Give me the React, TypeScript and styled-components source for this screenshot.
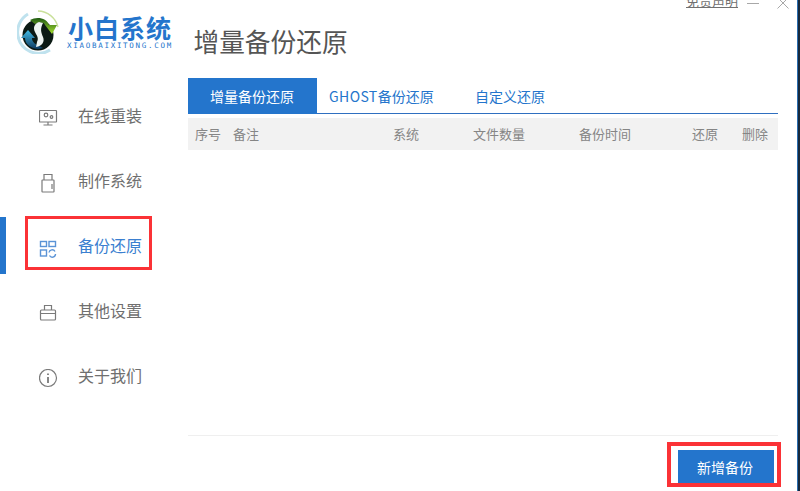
import React from 'react'
import styled, {createGlobalStyle} from 'styled-components'

const GlobalStyle = createGlobalStyle`
  html, body {
    margin: 0;
    padding: 0;
    background: #fff;
  }
  * {
    box-sizing: border-box;
  }
`

const font = `"Noto Sans CJK SC", "Noto Sans", sans-serif`
const blue = '#2475cc'

const Screen = styled.div`
  width: 800px;
  height: 491px;
  display: flex;
  overflow: hidden;
  background: #16293d;
  font-family: ${font};
`

const Window = styled.div`
  width: 798px;
  height: 491px;
  display: flex;
  background: #fff;
  border-right: 1px solid #2a6db0;
`

const Sidebar = styled.aside`
  width: 188px;
  flex-shrink: 0;
  display: flex;
  flex-direction: column;
`

const Logo = styled.div`
  height: 87px;
  padding: 10px 0 0 17px;
  display: flex;
  align-items: flex-start;
  gap: 9px;
`

const LogoText = styled.div`
  display: flex;
  flex-direction: column;
  padding-top: 3px;
`

const LogoTitle = styled.div`
  font-size: 25px;
  line-height: 28px;
  font-weight: 700;
  letter-spacing: 1px;
  color: ${blue};
  white-space: nowrap;
`

const LogoSub = styled.div`
  font-family: "DejaVu Sans Mono", monospace;
  font-size: 7.5px;
  line-height: 10px;
  letter-spacing: 1.72px;
  margin-left: -1px;
  color: ${blue};
  white-space: nowrap;
`

const Nav = styled.nav`
  display: flex;
  flex-direction: column;
  gap: 8px;
`

const NavItem = styled.div<{$active?: boolean}>`
  position: relative;
  height: 57px;
  display: flex;
  align-items: center;
  gap: 20px;
  padding-bottom: 2px;
  font-size: 16px;
  color: ${p => (p.$active ? '#3b7fd0' : '#6f6f6f')};
  border-left: ${p => (p.$active ? `6px solid ${blue}` : 'none')};
  padding-left: ${p => (p.$active ? '33px' : '39px')};
`

const NavIcon = styled.svg`
  width: 19px;
  height: 19px;
  margin-top: 8px;
  flex-shrink: 0;
  fill: none;
  stroke: #7a7a7a;
  stroke-width: 1.2;
`

const ActiveIcon = styled(NavIcon)`
  stroke: #5a93d6;
  stroke-width: 1.4;
`

const NavMark = styled.span`
  position: absolute;
  left: 19px;
  top: -1px;
  width: 127px;
  height: 54px;
  border: 3px solid #fb3236;
`

const Main = styled.main`
  flex: 1;
  width: 590px;
  display: flex;
  flex-direction: column;
  position: relative;
`

const TopLinks = styled.div`
  height: 20px;
  display: flex;
  align-items: flex-start;
`

const Disclaimer = styled.a`
  position: absolute;
  left: 498px;
  top: -9px;
  font-size: 13px;
  line-height: 19px;
  color: #707070;
  text-decoration: underline;
`

const WinIcon = styled.svg`
  position: absolute;
  top: 0;
  width: 14px;
  height: 10px;
  fill: none;
  stroke: #a8a8a8;
  stroke-width: 1;
`

const MinIcon = styled(WinIcon)`
  left: 558px;
`

const CloseIcon = styled(WinIcon)`
  left: 588px;
`

const Title = styled.h1`
  margin: 0;
  height: 58px;
  padding-left: 5.5px;
  font-size: 25.7px;
  line-height: 42px;
  font-weight: 400;
  color: #555;
`

const Tabs = styled.div`
  width: 590px;
  height: 36px;
  display: flex;
  border-bottom: 1px solid #2f6fc0;
`

const Tab = styled.div<{$active?: boolean; $width: number; $pad: number}>`
  width: ${p => p.$width}px;
  height: 36px;
  padding-left: ${p => p.$pad}px;
  font-size: 14px;
  line-height: 37px;
  white-space: nowrap;
  color: ${p => (p.$active ? '#fff' : blue)};
  background: ${p => (p.$active ? blue : 'transparent')};
`

const TabLatin = styled.span`
  letter-spacing: 0.4px;
`

const TableHead = styled.div`
  width: 590px;
  height: 32px;
  margin-top: 4px;
  padding: 0 0 2px 7px;
  display: grid;
  grid-template-columns: 38px 160px 80px 106px 113px 50px 36px;
  align-items: center;
  background: #f2f2f2;
  font-size: 13px;
  color: #858585;
`

const TableBody = styled.div`
  flex: 1;
  width: 590px;
  border-bottom: 1px solid #efefef;
`

const Footer = styled.div`
  width: 590px;
  height: 55px;
  padding: 14px 4px 0 0;
  display: flex;
  justify-content: flex-end;
  align-items: flex-start;
`

const AddButton = styled.div`
  position: relative;
  width: 96px;
  height: 33px;
  padding-right: 2px;
  background: ${blue};
  color: #fff;
  font-size: 14px;
  line-height: 34px;
  text-align: center;
`

const ButtonMark = styled.span`
  position: absolute;
  left: -11px;
  top: -8px;
  width: 114px;
  height: 45px;
  border: 4px solid #fb3236;
`

const LogoMark = () => (
  <svg width="42" height="44" viewBox="0 0 42 44">
    <defs>
      <linearGradient id="greenArrow" x1="0" y1="0" x2="0" y2="1">
        <stop offset="0" stopColor="#1f5a12" />
        <stop offset="1" stopColor="#a6e030" />
      </linearGradient>
      <linearGradient id="blueArrow" x1="0" y1="0" x2="0" y2="1">
        <stop offset="0" stopColor="#45bce6" />
        <stop offset="1" stopColor="#0c3a60" />
      </linearGradient>
    </defs>
    <path d="M21 1 A21 21 0 0 1 41 17" fill="none" stroke="#c9e09a" strokeWidth="1.4" />
    <path d="M33 40 A21 21 0 0 1 1 26 A21 21 0 0 1 11 4" fill="none" stroke="#bfe2ee" strokeWidth="3" />
    <circle cx="21" cy="25" r="15.5" fill="#0b1a14" />
    <path d="M13 10 C20 6 30 8 32 15 L40 15 L35 24 L28 15 C27 12 22 12 18 14 Z" fill="url(#greenArrow)" />
    <path d="M11 20 L18 28 L15 28 C15 32 18 34 22 36 L26 38 C18 41 8 36 8 28 L4 28 Z" fill="url(#blueArrow)" />
    <path d="M22 12 C17 14 16 18 18 22 C20 26 22 28 20 32 L19 37 C25 36 28 32 26 27 C24 22 23 19 26 13 Z" fill="#eef5f2" />
  </svg>
)

const MonitorIcon = () => (
  <NavIcon viewBox="0 0 19 19">
    <rect x="0.5" y="1.5" width="17" height="11.5" rx="0.5" />
    <path d="M9 13v3M4.5 16h9" />
    <circle cx="7" cy="6" r="1.8" />
    <circle cx="12.5" cy="8" r="1.3" />
  </NavIcon>
)

const UsbIcon = () => (
  <NavIcon viewBox="0 0 19 19">
    <path d="M5 6V0.5h8V6" />
    <rect x="3" y="6" width="12" height="12" rx="0.5" />
    <path d="M13 10v5" />
  </NavIcon>
)

const BackupIcon = () => (
  <ActiveIcon viewBox="0 0 19 19">
    <rect x="1.5" y="2.5" width="6" height="5" />
    <rect x="10" y="2.5" width="6.5" height="5" />
    <rect x="1.5" y="11" width="6" height="6" />
    <path d="M10 13.5a3.2 3.2 0 0 1 6-1M16.5 15a3.2 3.2 0 0 1-6 1.5" />
  </ActiveIcon>
)

const CaseIcon = () => (
  <NavIcon viewBox="0 0 19 19">
    <rect x="1.5" y="6" width="15" height="10" rx="1" />
    <path d="M5.5 6V1.5h7V6M1.5 9.5h15" />
  </NavIcon>
)

const InfoIcon = () => (
  <NavIcon viewBox="0 0 19 19">
    <circle cx="9" cy="9" r="8.5" />
    <path d="M9 8v6" strokeWidth="1.8" />
    <path d="M9 4.5v1.6" strokeWidth="1.8" />
  </NavIcon>
)

const columns = ['序号', '备注', '系统', '文件数量', '备份时间', '还原', '删除']

export default function App() {
  return (
    <Screen>
      <GlobalStyle />
      <Window>
        <Sidebar>
          <Logo>
            <LogoMark />
            <LogoText>
              <LogoTitle>小白系统</LogoTitle>
              <LogoSub>XIAOBAIXITONG.COM</LogoSub>
            </LogoText>
          </Logo>
          <Nav>
            <NavItem><MonitorIcon />在线重装</NavItem>
            <NavItem><UsbIcon />制作系统</NavItem>
            <NavItem $active>
              <BackupIcon />备份还原
              <NavMark />
            </NavItem>
            <NavItem><CaseIcon />其他设置</NavItem>
            <NavItem><InfoIcon />关于我们</NavItem>
          </Nav>
        </Sidebar>
        <Main>
          <TopLinks>
            <Disclaimer>免责声明</Disclaimer>
            <MinIcon viewBox="0 0 14 10">
              <path d="M1 3.5h12" />
            </MinIcon>
            <CloseIcon viewBox="0 0 14 10">
              <path d="M1.5 -2.5l11 11M12.5 -2.5l-11 11" />
            </CloseIcon>
          </TopLinks>
          <Title>增量备份还原</Title>
          <Tabs>
            <Tab $active $width={129} $pad={22}>增量备份还原</Tab>
            <Tab $width={146} $pad={12}><TabLatin>GHOST</TabLatin>备份还原</Tab>
            <Tab $width={120} $pad={12}>自定义还原</Tab>
          </Tabs>
          <TableHead>
            {columns.map(c => <span key={c}>{c}</span>)}
          </TableHead>
          <TableBody />
          <Footer>
            <AddButton>
              新增备份
              <ButtonMark />
            </AddButton>
          </Footer>
        </Main>
      </Window>
    </Screen>
  )
}
